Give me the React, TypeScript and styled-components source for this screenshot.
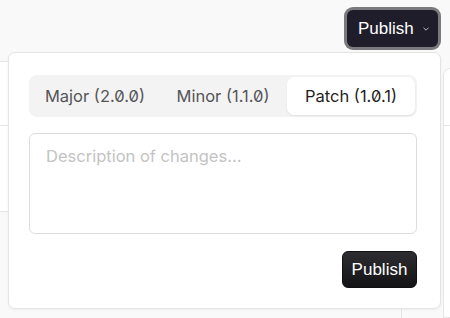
import React, { useState } from "react";
import styled, { createGlobalStyle } from "styled-components";

const GlobalStyle = createGlobalStyle`
    html, body {
        margin: 0;
        padding: 0;
        background: #faf9f9;
        font-family: Inter, "Noto Sans", sans-serif;
    }
    * {
        box-sizing: border-box;
    }
`;

const versions = [
    { key: "major", label: "Major (2.0.0)" },
    { key: "minor", label: "Minor (1.1.0)" },
    { key: "patch", label: "Patch (1.0.1)" },
];

const App = () => {
    const [bump, setBump] = useState("patch");
    const [notes, setNotes] = useState("");

    return (
        <Page>
            <GlobalStyle />
            <TopBar>
                <Trigger>
                    Publish
                    <svg width="8" height="8" viewBox="0 0 8 8">
                        <path
                            d="M1.8 3 L4 5.2 L6.2 3"
                            fill="none"
                            stroke="#b9b9c0"
                            strokeWidth="1"
                            strokeLinecap="round"
                        />
                    </svg>
                </Trigger>
            </TopBar>
            <Body>
                <ListColumn>
                    <ListRow height={64} />
                    <ListRow height={87} />
                </ListColumn>
                <Gutter />
                <SideCard>
                    <SideCardHeader />
                </SideCard>
            </Body>

            <Popover>
                <Segmented>
                    {versions.map((v) => (
                        <Segment
                            key={v.key}
                            active={bump === v.key}
                            onClick={() => setBump(v.key)}
                        >
                            {v.label}
                        </Segment>
                    ))}
                </Segmented>
                <Notes
                    placeholder="Description of changes..."
                    value={notes}
                    onChange={(e) => setNotes(e.target.value)}
                />
                <Footer>
                    <PublishButton>Publish</PublishButton>
                </Footer>
            </Popover>
        </Page>
    );
};

export default App;

const Page = styled.div`
    position: relative;
    width: 450px;
    height: 318px;
    overflow: hidden;
    display: flex;
    flex-direction: column;
`;

const TopBar = styled.div`
    height: 61px;
    display: flex;
    justify-content: flex-end;
    align-items: flex-start;
    padding: 10px 12px 0 0;
`;

const Trigger = styled.button`
    height: 37px;
    width: 91px;
    display: flex;
    align-items: center;
    gap: 8px;
    padding: 0 0 0 11px;
    border: none;
    border-radius: 6px;
    background: #1f1d2a;
    box-shadow: 0 0 0 3px #7a7a7c;
    color: #ffffff;
    font-family: "Liberation Sans", Arial, sans-serif;
    font-size: 17px;
    cursor: pointer;
`;

const Body = styled.div`
    flex: 1;
    display: flex;
`;

const ListColumn = styled.div`
    width: 402px;
    border-right: 1px solid #e6e4e4;
    display: flex;
    flex-direction: column;
`;

const ListRow = styled.div<{ height: number }>`
    height: ${(p) => p.height}px;
    background: #ffffff;
    border-top: 1px solid #e6e4e4;
    &:last-child {
        border-bottom: 1px solid #e6e4e4;
    }
`;

const Gutter = styled.div`
    width: 41px;
`;

const SideCard = styled.div`
    flex: 1;
    margin-top: 7px;
    background: #ffffff;
    border: 1px solid #e6e4e4;
    border-right: none;
    border-radius: 8px 0 0 0;
`;

const SideCardHeader = styled.div`
    height: 57px;
    border-bottom: 1px solid #e6e4e4;
`;

const Popover = styled.div`
    position: absolute;
    top: 52px;
    left: 8px;
    width: 433px;
    padding: 22px 23px 20px 20px;
    background: #ffffff;
    border: 1px solid #e6e4e1;
    border-radius: 7px;
    box-shadow: 0 1px 3px rgba(0, 0, 0, 0.05);
    display: flex;
    flex-direction: column;
`;

const Segmented = styled.div`
    display: grid;
    grid-template-columns: repeat(3, 1fr);
    height: 42px;
    padding: 2px;
    background: #f3f3f3;
    border-radius: 8px;
`;

const Segment = styled.button<{ active: boolean }>`
    border: none;
    border-radius: 7px;
    background: ${(p) => (p.active ? "#ffffff" : "transparent")};
    box-shadow: ${(p) =>
        p.active ? "0 1px 2px rgba(0, 0, 0, 0.08)" : "none"};
    color: ${(p) => (p.active ? "#1f1f22" : "#555558")};
    font-family: Inter, "Noto Sans", sans-serif;
    font-size: 16.5px;
    font-feature-settings: "zero" 1;
    font-variant-numeric: slashed-zero;
    cursor: pointer;
    padding: 0;
`;

const Notes = styled.textarea`
    margin-top: 16px;
    height: 101px;
    resize: none;
    padding: 12px 16px;
    border: 1px solid #dddddd;
    border-radius: 6px;
    font-family: Inter, "Noto Sans", sans-serif;
    font-size: 16.5px;
    color: #222;
    outline: none;
    &::placeholder {
        color: #c3c3c3;
    }
`;

const Footer = styled.div`
    margin-top: 17px;
    display: flex;
    justify-content: flex-end;
`;

const PublishButton = styled.button`
    width: 75px;
    height: 37px;
    padding: 0;
    border: 1px solid #111114;
    border-radius: 6px;
    background: linear-gradient(#2d2d31, #141416);
    color: #ffffff;
    font-family: "Liberation Sans", Arial, sans-serif;
    font-size: 17px;
    cursor: pointer;
`;
